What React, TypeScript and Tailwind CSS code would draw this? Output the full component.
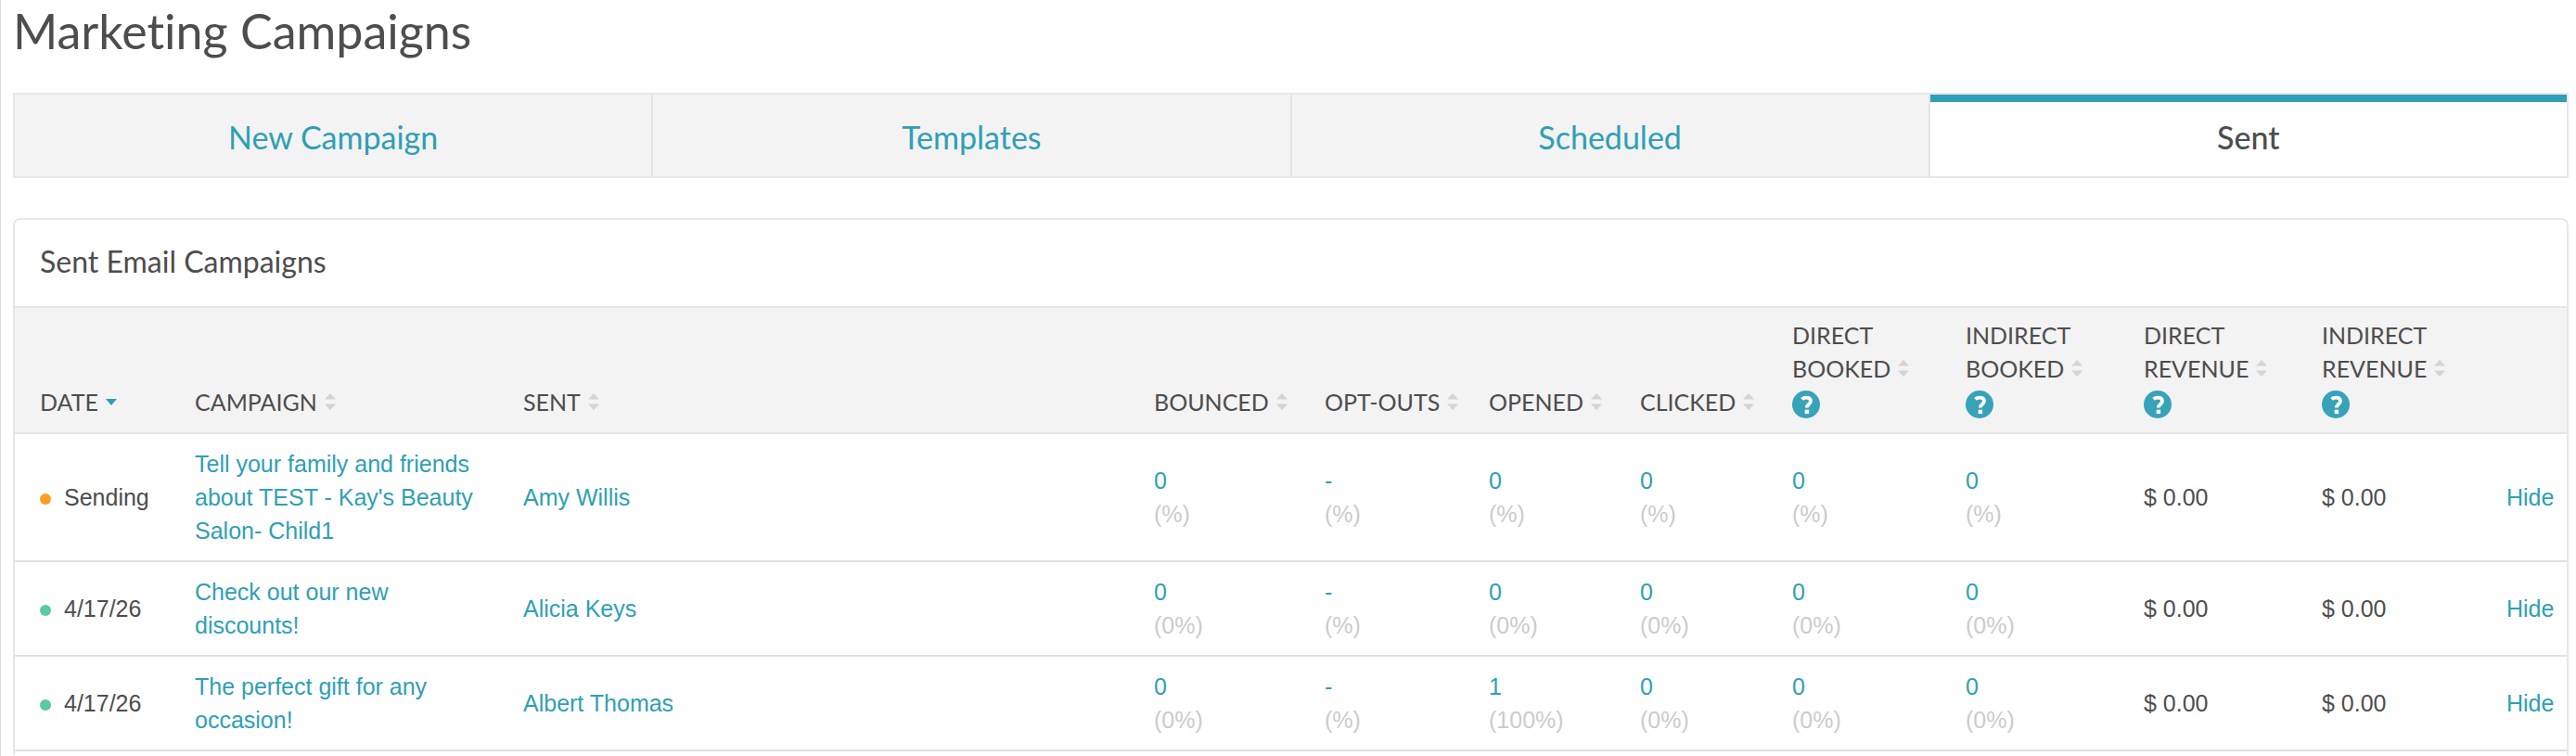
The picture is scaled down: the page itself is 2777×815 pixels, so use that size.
type Status = "sending" | "sent";

type Row = {
  status: Status;
  date: string;
  campaign: string;
  recipient: string;
  stats: { value: string; percent: string }[];
  revenue: string[];
};

const tabs = ["New Campaign", "Templates", "Scheduled", "Sent"];

const columns = [
  { label: ["DATE"], width: "w-[167px]", active: true },
  { label: ["CAMPAIGN"], width: "w-[354px]" },
  { label: ["SENT"], width: "" },
  { label: ["BOUNCED"], width: "w-[184px]" },
  { label: ["OPT-OUTS"], width: "w-[177px]" },
  { label: ["OPENED"], width: "w-[163px]" },
  { label: ["CLICKED"], width: "w-[164px]" },
  { label: ["DIRECT", "BOOKED"], width: "w-[187px]", help: true },
  { label: ["INDIRECT", "BOOKED"], width: "w-[192px]", help: true },
  { label: ["DIRECT", "REVENUE"], width: "w-[192px]", help: true },
  { label: ["INDIRECT", "REVENUE"], width: "w-[199px]", help: true },
];

const stat = (value: string, percent: string) => ({ value, percent });

const rows: Row[] = [
  {
    status: "sending",
    date: "Sending",
    campaign: "Tell your family and friends about TEST - Kay's Beauty Salon- Child1",
    recipient: "Amy Willis",
    stats: [stat("0", "(%)"), stat("-", "(%)"), stat("0", "(%)"), stat("0", "(%)"), stat("0", "(%)"), stat("0", "(%)")],
    revenue: ["$ 0.00", "$ 0.00"],
  },
  {
    status: "sent",
    date: "4/17/26",
    campaign: "Check out our new discounts!",
    recipient: "Alicia Keys",
    stats: [stat("0", "(0%)"), stat("-", "(%)"), stat("0", "(0%)"), stat("0", "(0%)"), stat("0", "(0%)"), stat("0", "(0%)")],
    revenue: ["$ 0.00", "$ 0.00"],
  },
  {
    status: "sent",
    date: "4/17/26",
    campaign: "The perfect gift for any occasion!",
    recipient: "Albert Thomas",
    stats: [stat("0", "(0%)"), stat("-", "(%)"), stat("1", "(100%)"), stat("0", "(0%)"), stat("0", "(0%)"), stat("0", "(0%)")],
    revenue: ["$ 0.00", "$ 0.00"],
  },
];

function SortIcon({ active }: { active?: boolean }) {
  if (active) {
    return (
      <svg viewBox="0 0 12 7" className="h-[7px] w-3 shrink-0 fill-[#2f9fb5]" aria-hidden="true">
        <path d="M0 0h12L6 7z" />
      </svg>
    );
  }
  return (
    <svg viewBox="0 0 12 18" className="h-[18px] w-3 shrink-0 fill-[#d4d4d4]" aria-hidden="true">
      <path d="M6 0l6 6.500H0zM0 11.500h12L6 18z" />
    </svg>
  );
}

function HelpIcon() {
  return (
    <svg viewBox="0 0 30 30" className="size-[30px]" aria-hidden="true">
      <circle cx="15" cy="15" r="15" fill="#36a3b9" />
      <path d="M10.600 9.400C11.700 8.200 13.300 7.600 15.300 7.600c2.900 0 4.700 1.400 4.700 3.700 0 3.500-4.200 3.500-4.200 7.200" fill="none" stroke="#fff" strokeWidth="3.800" />
      <rect x="13.700" y="20.700" width="4.400" height="4.400" fill="#fff" />
    </svg>
  );
}

export default function App() {
  return (
    <div className="min-h-screen border-l border-[#dcdcdc] bg-white pl-[13px] pr-[8px] font-['Liberation_Sans',Arial,sans-serif] text-[25px] leading-9 text-[#4d4d4d] [font-variant-ligatures:none]">
      <h1 className="pt-0.5 font-[Lato,sans-serif] text-[52px] leading-[62px]">Marketing Campaigns</h1>

      <nav className="mt-9 flex border-2 border-[#e7e7e7] font-[Lato,sans-serif] text-[34px]">
        {tabs.map((tab) => {
          const current = tab === "Sent";
          return (
            <a
              key={tab}
              href="#"
              aria-current={current ? "page" : undefined}
              className={
                current
                  ? "flex h-[88px] flex-1 items-center justify-center border-t-8 border-[#2f9fb5] pb-1 font-medium text-[#4d4d4d]"
                  : "flex h-[88px] flex-1 items-center justify-center border-r-2 border-[#e3e3e3] bg-[#f3f3f3] pt-1 text-[#2f9fb5]"
              }
            >
              {tab}
            </a>
          );
        })}
      </nav>

      <section className="mt-[43px] rounded-t-lg border-2 border-b-0 border-[#e7e7e7]">
        <h2 className="px-[27px] pt-[22px] pb-[26px] font-[Lato,sans-serif] text-[32px] leading-[45px]">Sent Email Campaigns</h2>
        <table className="w-full table-fixed border-collapse text-left">
          <thead>
            <tr className="border-y-2 border-[#e5e5e5] bg-[#f3f3f3] align-bottom font-[Lato,sans-serif]">
              {columns.map(({ label, width, help, active }) => (
                <th key={label.join(" ")} scope="col" className={`${width} pt-[11px] pb-[15px] pl-[27px] font-normal`}>
                  {label.length > 1 && <span className="block">{label[0]}</span>}
                  <button type="button" className="flex items-center gap-2">
                    {label[label.length - 1]}
                    <SortIcon active={active} />
                  </button>
                  {help && (
                    <button type="button" aria-label="Help" className="flex h-9 items-end">
                      <HelpIcon />
                    </button>
                  )}
                </th>
              ))}
              <th className="w-[92px]" />
            </tr>
          </thead>
          <tbody>
            {rows.map((row) => (
              <tr key={row.campaign} className="border-b-2 border-[#e0e0e0]">
                <td className="pl-[27px]">
                  <span className="flex items-center gap-3.5 whitespace-nowrap">
                    <span className={`mt-1 size-3 shrink-0 rounded-full ${row.status === "sending" ? "bg-[#fb9f21]" : "bg-[#5acb9e]"}`} />
                    {row.date}
                  </span>
                </td>
                <td className="py-[14px] pl-[27px] pr-4">
                  <a href="#" className="text-[#2f9fb5]">{row.campaign}</a>
                </td>
                <td className="pl-[27px]">
                  <a href="#" className="text-[#2f9fb5]">{row.recipient}</a>
                </td>
                {row.stats.map((s, i) => (
                  <td key={i} className="pl-[27px]">
                    <a href="#" className="block text-[#2f9fb5]">{s.value}</a>
                    <span className="block text-[#cbcbcb]">{s.percent}</span>
                  </td>
                ))}
                {row.revenue.map((amount, i) => (
                  <td key={i} className="pl-[27px]">{amount}</td>
                ))}
                <td className="pl-[27px]">
                  <button type="button" className="text-[#2f9fb5]">Hide</button>
                </td>
              </tr>
            ))}
          </tbody>
        </table>
        <div className="h-1" />
      </section>
    </div>
  );
}
